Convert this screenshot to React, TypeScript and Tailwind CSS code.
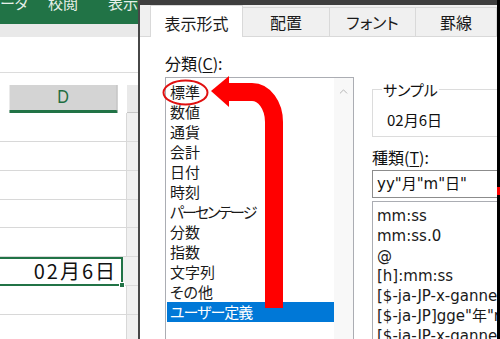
import React from "react";
import { ChevronUp } from "lucide-react";

const categories = [
  "標準",
  "数値",
  "通貨",
  "会計",
  "日付",
  "時刻",
  "パーセンテージ",
  "分数",
  "指数",
  "文字列",
  "その他",
  "ユーザー定義",
];

// kana in the reference UI font runs narrower than Noto's
const tightItems: Record<string, string> = {
  パーセンテージ: "tracking-[-2px]",
  ユーザー定義: "tracking-[-1px]",
};

const formats = [
  "mm:ss",
  "mm:ss.0",
  "@",
  "[h]:mm:ss",
  '[$-ja-JP-x-gannen]ggge"年"m"月"d"日"',
  '[$-ja-JP]gge"年"m"月"d"日"',
  '[$-ja-JP-x-gannen]ge.m.d',
];

// row heights below the column header (px)
const rowHeights = [29, 29, 29, 28, 29, 29, 29, 29];

function Sheet() {
  return (
    <div className="w-[138px] shrink-0 flex flex-col bg-white overflow-hidden">
      {/* ribbon, mostly cut off at the top */}
      <div className="h-[24px] shrink-0 bg-[#217346] flex text-[15px] leading-[15px] text-[#e6efe9] overflow-hidden">
        <span className="w-[48px] -mt-[5px] shrink-0">ータ</span>
        <span className="w-[60px] -mt-[5px] shrink-0">校閲</span>
        <span className="-mt-[5px] shrink-0">表示</span>
      </div>
      <div className="h-[13px] shrink-0 bg-[#e9e9e9]" />
      <div className="h-[36px] shrink-0 bg-white border-b border-[#dcdcdc]" />
      <div className="h-[12px] shrink-0 bg-white" />

      {/* column header */}
      <div className="h-[28px] shrink-0 flex">
        <div className="w-[127px] shrink-0 flex items-center justify-center bg-[#d4d4d4] border-r border-[#b8b8b8] border-b-[3px] border-b-[#217346] font-['Liberation_Sans',sans-serif] text-[19px] text-[#1e6e41] scale-x-[0.85]">
          D
        </div>
        <div className="flex-1 bg-[#e9e9e9] border-b border-[#c6c6c6]" />
      </div>

      {rowHeights.map((h, i) => (
        <div key={i} className="flex shrink-0" style={{ height: h }}>
          {i === 5 ? (
            <div className="relative w-[127px] shrink-0 -ml-[4px] border-2 border-[#217346] flex items-end justify-end pr-[6px] pb-[1px] text-[20px] leading-[24px] tracking-[2px] text-[#111]">
              <span className="-mr-[2px]">02月6日</span>
              <div className="absolute -right-[4px] -bottom-[4px] w-[6px] h-[6px] bg-[#217346] border border-white" />
            </div>
          ) : (
            <div className="w-[127px] shrink-0 border-r border-b border-[#d8d8d8]" />
          )}
          <div className="flex-1 bg-[#f0f0f0] border-b border-[#dadada]" />
        </div>
      ))}
    </div>
  );
}

function Tabs() {
  return (
    <div className="h-[32px] shrink-0 flex bg-[#f0f0f0] text-[16px] leading-[20px] text-[#1a1a1a]">
      <div className="w-[10px] shrink-0 border-b border-[#d9d9d9]" />
      <div className="w-[93px] shrink-0 h-[32px] bg-white border-x border-t border-[#d9d9d9] flex items-center justify-center pt-[2px]">
        表示形式
      </div>
      {[
        ["配置", "w-[87px]"],
        ["フォント", "w-[86px]"],
        ["罫線", "w-[81px]"],
      ].map(([label, w]) => (
        <div
          key={label}
          className={`${w} shrink-0 self-end h-[30px] border-t border-r border-b border-[#d9d9d9] flex items-center justify-center`}
        >
          {label}
        </div>
      ))}
      <div className="flex-1 border-b border-[#d9d9d9]" />
    </div>
  );
}

function Dialog() {
  return (
    <div className="w-[359px] shrink-0 flex flex-col border-l-2 border-[#474747] bg-white overflow-hidden">
      <div className="h-[5px] shrink-0 bg-[#3e3e3e]" />
      <Tabs />

      <div className="flex-1 flex pt-[16px] text-[#111]">
        {/* category list */}
        <div className="pl-[25px] flex flex-col shrink-0">
          <div className="h-[20px] text-[16px] leading-[20px]">
            分類(<span className="underline underline-offset-2">C</span>):
          </div>
          <div className="mt-[4px] w-[189px] h-[270px] border border-[#abadb3] flex">
            <div className="flex-1 pt-[4px] pl-px">
              {categories.map((c) => (
                <div
                  key={c}
                  className={`h-[20px] pl-[3px] text-[15px] leading-[20px] whitespace-nowrap ${tightItems[c] ?? ""} ${
                    c === "ユーザー定義" ? "bg-[#0078d7] text-white" : "text-[#1a1a1a]"
                  }`}
                >
                  {c}
                </div>
              ))}
            </div>
            <div className="w-[19px] shrink-0 bg-[#f8f8f8] flex justify-center pt-[7px]">
              <ChevronUp size={13} strokeWidth={1.5} className="text-[#a6a6a6]" />
            </div>
          </div>
        </div>

        {/* sample / type */}
        <div className="ml-[18px] w-[125px] flex flex-col overflow-hidden">
          <div className="relative mt-[36px] w-[220px] h-[48px] shrink-0 border border-[#dcdcdc]">
            <span className="absolute left-[9px] -top-[10px] bg-white px-px text-[15px] leading-[20px]">
              サンプル
            </span>
            <div className="pt-[20px] pl-[14px] text-[15px] leading-[20px]">02月6日</div>
          </div>
          <div className="mt-[10px] h-[20px] text-[16px] leading-[20px] whitespace-nowrap">
            種類(<span className="underline underline-offset-2">T</span>):
          </div>
          <div className="mt-[3px] w-[220px] h-[28px] shrink-0 border border-[#8c8c8c] pl-[4px] font-['DejaVu_Sans','Noto_Sans_CJK_JP',sans-serif] text-[15px] leading-[26px] whitespace-nowrap">
            yy"月"m"日"
          </div>
          <div className="mt-[3px] w-[220px] flex-1 border border-[#abadb3] pt-[4px] pl-[4px] font-['DejaVu_Sans','Noto_Sans_CJK_JP',sans-serif]">
            {formats.map((f) => (
              <div key={f} className="h-[20px] text-[15px] leading-[20px] whitespace-nowrap text-[#1a1a1a]">
                {f}
              </div>
            ))}
          </div>
        </div>
      </div>
    </div>
  );
}

export default function App() {
  return (
    <div className="relative w-[500px] h-[339px] overflow-hidden flex bg-white font-['Noto_Sans_CJK_JP',sans-serif] [font-feature-settings:'palt']">
      <Sheet />
      <Dialog />
      <div className="w-[3px] shrink-0 bg-black" />

      {/* annotation: circle and arrow */}
      <svg className="absolute inset-0 pointer-events-none" width={500} height={339} viewBox="0 0 500 339">
        <ellipse cx={185.5} cy={92.5} rx={22} ry={12} fill="none" stroke="#e01010" strokeWidth={2} />
        <path d="M274 308 V122 A22 30 0 0 0 252 92 H226" fill="none" stroke="#ff0000" strokeWidth={18} />
        <polygon points="211,91 229,76 229,107" fill="#ff0000" />
        <rect x={497} y={187} width={3} height={8} fill="#ff0000" />
      </svg>
    </div>
  );
}
